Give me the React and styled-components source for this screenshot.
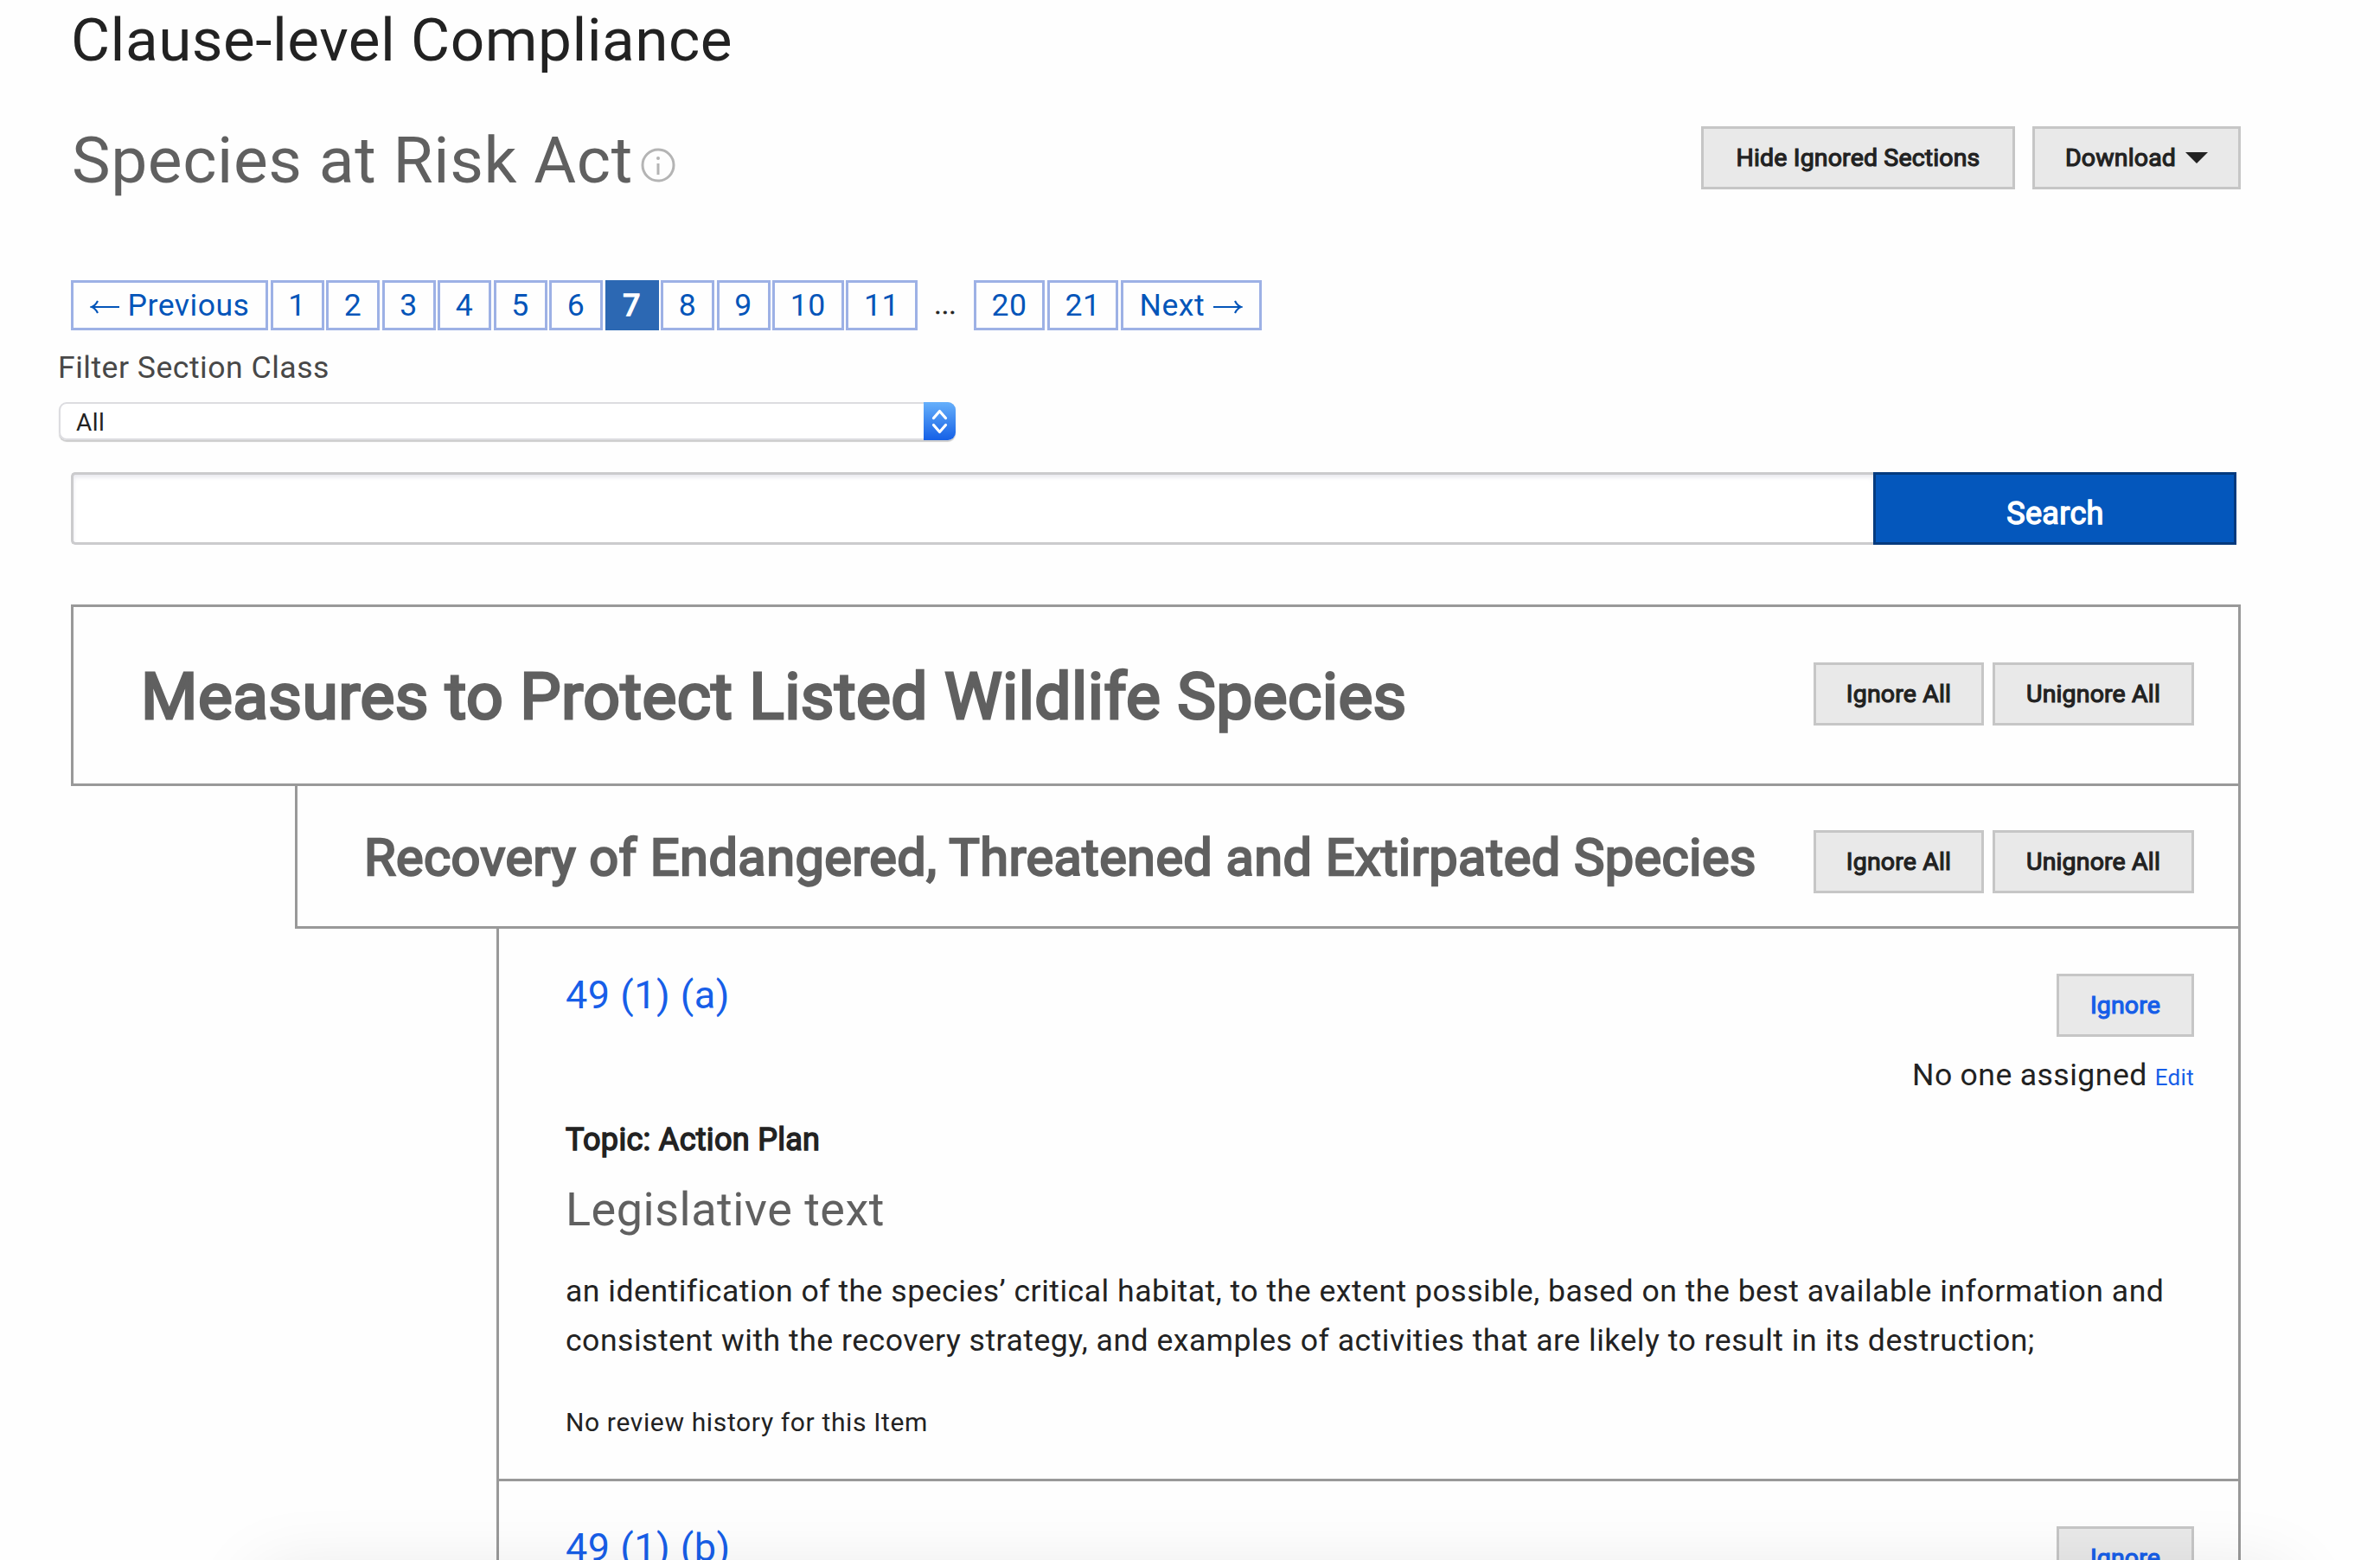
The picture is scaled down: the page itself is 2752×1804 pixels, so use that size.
import React, { useState } from 'react';
import styled, { createGlobalStyle } from 'styled-components';

const GlobalStyle = createGlobalStyle`
  * {
    box-sizing: border-box;
  }
  body {
    margin: 0;
    background: #fefefe;
    color: #222;
    font-family: Roboto, "Liberation Sans", sans-serif;
    font-size: 35.6px;
    letter-spacing: 0.5px;
  }
`;

const Page = styled.main`
  height: 1804px;
  overflow: hidden;
  position: relative;
  padding: 0 161px 0 82px;
`;

const PageTitle = styled.h1`
  margin: 0;
  height: 94px;
  font-size: 69.3px;
  font-weight: 400;
  line-height: 94px;
`;

const Header = styled.header`
  display: flex;
  justify-content: space-between;
  align-items: flex-start;
  height: 230px;
  padding-top: 52px;
`;

const ActName = styled.h2`
  display: flex;
  align-items: center;
  gap: 9px;
  margin: 0;
  padding-left: 1px;
  font-size: 75px;
  font-weight: 400;
  letter-spacing: 0.6px;
  line-height: 78px;
  color: #606060;
`;

const InfoIcon = styled.svg`
  width: 40px;
  height: 40px;
  margin-top: 12px;
`;

const ButtonGroup = styled.div`
  display: flex;
  gap: ${({ gap }) => gap || 10}px;
`;

const Button = styled.button`
  display: flex;
  align-items: center;
  justify-content: center;
  gap: 11px;
  width: ${({ width }) => width}px;
  height: 73px;
  padding: 0;
  border: 3px solid #c6c6c6;
  background: #e9e9e9;
  color: ${({ link }) => (link ? '#175ee8' : '#222')};
  font: inherit;
  font-size: 28.5px;
  letter-spacing: 0.15px;
  -webkit-text-stroke: 1.2px;
  cursor: pointer;
`;

const Caret = styled.span`
  border: 13px solid transparent;
  border-top-color: #222;
  border-bottom: 0;
`;

const Pagination = styled.nav`
  display: flex;
  gap: 2.5px;
  height: 58px;
`;

const PageLink = styled.a`
  display: flex;
  align-items: center;
  justify-content: center;
  gap: 10px;
  width: ${({ width }) => width || 62}px;
  height: 58px;
  border: 3px solid #9db1e5;
  color: #0455b9;
  cursor: pointer;
  ${({ active }) =>
    active &&
    `
    background: #2c68b3;
    border-color: #2c68b3;
    color: #fff;
    -webkit-text-stroke: 1.6px;
  `}
`;

const Dots = styled.span`
  width: 60px;
  text-align: center;
  font-size: 30px;
  line-height: 58px;
  -webkit-text-stroke: 0.6px;
`;

const FilterLabel = styled.label`
  display: block;
  margin: 22px 0 0 -15px;
  line-height: 43px;
  color: #484848;
`;

const Select = styled.div`
  display: flex;
  justify-content: space-between;
  width: 1037px;
  height: 44px;
  margin: 18px 0 0 -14px;
  padding-left: 20px;
  border-radius: 9px;
  overflow: hidden;
  background: #fff;
  box-shadow: inset 0 0 0 2px #dcdce0, 0 2px 1px #ccc;
  font-size: 28px;
  line-height: 48px;
`;

const SelectArrows = styled.svg`
  width: 37px;
  height: 44px;
  background: linear-gradient(#66b0fb, #1560e6);
`;

const SearchBar = styled.form`
  display: flex;
  width: 2504px;
  height: 84px;
  margin-top: 37px;
`;

const SearchInput = styled.input`
  flex: 1;
  border: 3px solid #cbcbcd;
  border-right: 0;
  border-radius: 5px 0 0 5px;
  background: #fff;
  box-shadow: inset 0 3px 5px #e8e8ee;
  outline: 0;
`;

const SearchButton = styled.button`
  width: 420px;
  padding: 11px 0 0 1px;
  border: 3px solid #043a7e;
  background: #0457bc;
  color: #fff;
  font: inherit;
  font-size: 36px;
  letter-spacing: 0.3px;
  -webkit-text-stroke: 1.4px;
`;

const Part = styled.section`
  display: flex;
  align-items: center;
  justify-content: space-between;
  height: 210px;
  margin-top: 69px;
  padding: 0 51px 3px 78px;
  border: 3px solid #999;
`;

const PartTitle = styled.h2`
  margin: 0;
  padding-top: 4px;
  color: #606060;
  font-size: 75px;
  font-weight: 400;
  letter-spacing: 0.44px;
  white-space: nowrap;
  -webkit-text-stroke: 3px;
`;

const Division = styled(Part)`
  height: 165px;
  margin: 0 0 0 259px;
  padding: 12px 51px 0 77px;
  border-top: 0;
`;

const DivisionTitle = styled(PartTitle)`
  padding: 0 0 9px;
  font-size: 59.5px;
  letter-spacing: 0.42px;
  -webkit-text-stroke: 2.4px;
`;

const Clause = styled.article`
  height: 639px;
  margin-left: 492px;
  padding: 52px 51px 0 77px;
  border: 3px solid #999;
  border-top: 0;
`;

const ClauseHeader = styled.div`
  display: flex;
  justify-content: space-between;
  align-items: flex-start;
  height: 96px;
`;

const ClauseLink = styled.a`
  color: #175ee8;
  font-size: 45px;
  line-height: 50px;
`;

const Assigned = styled.div`
  text-align: right;
  line-height: 42px;
  word-spacing: -0.5px;
`;

const EditLink = styled.a`
  color: #175ee8;
  font-size: 26px;
  letter-spacing: 0.3px;
`;

const Topic = styled.h4`
  margin: 30px 0 0;
  font-size: 36px;
  font-weight: 400;
  letter-spacing: 0.3px;
  line-height: 42px;
  -webkit-text-stroke: 1.5px;
`;

const TextHeading = styled.h3`
  margin: 28px 0 0;
  color: #606060;
  font-size: 54px;
  font-weight: 400;
  line-height: 64px;
`;

const LegislativeText = styled.p`
  margin: 34px 0 0;
  line-height: 57px;
`;

const History = styled.p`
  margin: 48px 0 0;
  font-size: 30px;
  letter-spacing: 0.64px;
  line-height: 36px;
`;

// soft shadow rising from the panel docked under the page
const DockShadow = styled.div`
  position: absolute;
  left: 300px;
  right: 107px;
  top: 1820px;
  height: 200px;
  box-shadow: 0 0 85px rgba(0, 20, 10, 0.1);
`;

const clauses = [
  {
    id: '49 (1) (a)',
    topic: 'Action Plan',
    text: 'an identification of the species’ critical habitat, to the extent possible, based on the best available information and consistent with the recovery strategy, and examples of activities that are likely to result in its destruction;',
  },
  { id: '49 (1) (b)' },
];

function Arrow({ d }) {
  return (
    <svg width="34" height="26" fill="none" stroke="currentColor" strokeWidth="2.2">
      <path d={d} />
    </svg>
  );
}

function Pager() {
  const [active, setActive] = useState(7);
  const link = (n) => (
    <PageLink key={n} active={active === n} width={n > 9 ? 82.6 : 62} onClick={() => setActive(n)}>
      {n}
    </PageLink>
  );

  return (
    <Pagination>
      <PageLink width={228}>
        <Arrow d="M34 15H2M9 8C7 12 5 14 2 15C5 16 7 18 9 22" /> Previous
      </PageLink>
      {[1, 2, 3, 4, 5, 6, 7, 8, 9, 10, 11].map(link)}
      <Dots>...</Dots>
      {[20, 21].map(link)}
      <PageLink width={163}>
        Next <Arrow d="M0 15H32M25 8C27 12 29 14 32 15C29 16 27 18 25 22" />
      </PageLink>
    </Pagination>
  );
}

function IgnoreButtons() {
  return (
    <ButtonGroup>
      <Button width={197}>Ignore All</Button>
      <Button width={233}>Unignore All</Button>
    </ButtonGroup>
  );
}

function ClauseItem({ id, topic, text }) {
  return (
    <Clause>
      <ClauseHeader>
        <ClauseLink>{id}</ClauseLink>
        <Button link width={159}>Ignore</Button>
      </ClauseHeader>
      {text && (
        <>
          <Assigned>
            No one assigned <EditLink>Edit</EditLink>
          </Assigned>
          <Topic>Topic: {topic}</Topic>
          <TextHeading>Legislative text</TextHeading>
          <LegislativeText>{text}</LegislativeText>
          <History>No review history for this Item</History>
        </>
      )}
    </Clause>
  );
}

export default function App() {
  return (
    <>
      <GlobalStyle />
      <Page>
        <PageTitle>Clause-level Compliance</PageTitle>
        <Header>
          <ActName>
            Species at Risk Act
            <InfoIcon viewBox="0 0 40 40" fill="none" stroke="#b4b4b4" strokeWidth="3">
              <circle cx="20" cy="20" r="18" />
              <path d="M20 18v13" />
              <circle cx="20" cy="12" r="2" fill="#b4b4b4" stroke="none" />
            </InfoIcon>
          </ActName>
          <ButtonGroup gap={20}>
            <Button width={363}>Hide Ignored Sections</Button>
            <Button width={241}>
              Download <Caret />
            </Button>
          </ButtonGroup>
        </Header>
        <Pager />
        <FilterLabel>Filter Section Class</FilterLabel>
        <Select>
          All
          <SelectArrows viewBox="0 0 37 44" fill="none" stroke="#fff" strokeWidth="3.2" strokeLinecap="round" strokeLinejoin="round">
            <path d="M11.5 18.5l7-8 7 8M11.5 26.5l7 8 7-8" />
          </SelectArrows>
        </Select>
        <SearchBar>
          <SearchInput />
          <SearchButton type="button">Search</SearchButton>
        </SearchBar>
        <Part>
          <PartTitle>Measures to Protect Listed Wildlife Species</PartTitle>
          <IgnoreButtons />
        </Part>
        <Division>
          <DivisionTitle>Recovery of Endangered, Threatened and Extirpated Species</DivisionTitle>
          <IgnoreButtons />
        </Division>
        {clauses.map((clause) => (
          <ClauseItem key={clause.id} {...clause} />
        ))}
        <DockShadow />
      </Page>
    </>
  );
}
